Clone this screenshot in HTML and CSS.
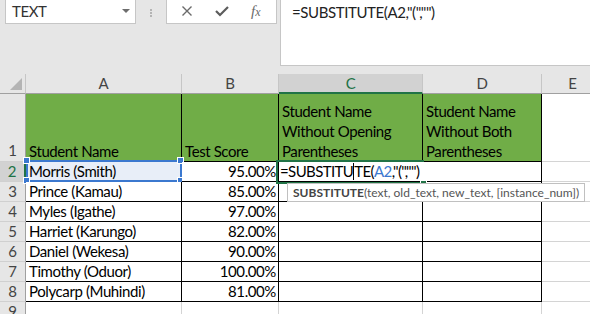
FILE: index.html
```html
<!DOCTYPE html>
<html>
<head>
    <meta charset="UTF-8">
    <title>SUBSTITUTE</title>
    <link rel="stylesheet" href="styles.css">
</head>
<body>
<div class="toolbar">
    <div class="name-box">
        <span>TEXT</span>
        <span class="drop-arrow"></span>
    </div>
    <div class="grip"><i></i><i></i><i></i></div>
    <div class="fx-box">
        <svg class="tool-icon" width="12" height="12" viewBox="0 0 12 12">
            <path d="M1.5 1.5 L10.5 10.5 M10.5 1.5 L1.5 10.5" stroke="#6a6a6a" stroke-width="1.4" fill="none"/>
        </svg>
        <svg class="tool-icon" width="14" height="12" viewBox="0 0 14 12">
            <path d="M1 6 L5 10 L13 2" stroke="#5c5c5c" stroke-width="2.2" fill="none"/>
        </svg>
        <span class="fx"><i>f</i><i class="fx-x">x</i></span>
    </div>
    <div class="formula-bar">=SUBSTITUTE(A2,"(","")</div>
</div>

<div class="sheet">
    <div class="hd corner"><span class="corner-tri"></span></div>
    <div class="hd">A</div>
    <div class="hd">B</div>
    <div class="hd hd-active">C</div>
    <div class="hd">D</div>
    <div class="hd">E</div>

    <div class="rh rh-tall">1</div>
    <div class="cell title">Student Name</div>
    <div class="cell title">Test Score</div>
    <div class="cell title">Student Name<br>Without Opening<br>Parentheses</div>
    <div class="cell title">Student Name<br>Without Both<br>Parentheses</div>
    <div class="cell blank"></div>

    <div class="rh rh-active">2</div>
    <div class="cell ref">Morris (Smith)<span class="ref-box"></span><span class="knob knob-tl"></span><span class="knob knob-tr"></span><span class="knob knob-bl"></span><span class="knob knob-br"></span></div>
    <div class="cell num">95.00%</div>
    <div class="cell editing">=SUBSTITU<span class="caret"></span>TE(<span class="ref-text">A2</span>,"(","")<span class="active-box"></span><span class="fill-handle"></span><div class="tip"><b>SUBSTITUTE</b>(text, old_text, new_text, [instance_num])</div></div>
    <div class="cell"></div>
    <div class="cell blank"></div>

    <div class="rh">3</div>
    <div class="cell">Prince (Kamau)</div>
    <div class="cell num">85.00%</div>
    <div class="cell"></div>
    <div class="cell"></div>
    <div class="cell blank"></div>

    <div class="rh">4</div>
    <div class="cell">Myles (Igathe)</div>
    <div class="cell num">97.00%</div>
    <div class="cell"></div>
    <div class="cell"></div>
    <div class="cell blank"></div>

    <div class="rh">5</div>
    <div class="cell">Harriet (Karungo)</div>
    <div class="cell num">82.00%</div>
    <div class="cell"></div>
    <div class="cell"></div>
    <div class="cell blank"></div>

    <div class="rh">6</div>
    <div class="cell">Daniel (Wekesa)</div>
    <div class="cell num">90.00%</div>
    <div class="cell"></div>
    <div class="cell"></div>
    <div class="cell blank"></div>

    <div class="rh">7</div>
    <div class="cell">Timothy (Oduor)</div>
    <div class="cell num">100.00%</div>
    <div class="cell"></div>
    <div class="cell"></div>
    <div class="cell blank"></div>

    <div class="rh">8</div>
    <div class="cell">Polycarp (Muhindi)</div>
    <div class="cell num">81.00%</div>
    <div class="cell"></div>
    <div class="cell"></div>
    <div class="cell blank"></div>

    <div class="rh">9</div>
    <div class="cell blank"></div>
    <div class="cell blank"></div>
    <div class="cell blank"></div>
    <div class="cell blank"></div>
    <div class="cell blank"></div>
</div>
</body>
</html>
```

FILE: styles.css
```css
body {
    margin: 0;
    width: 590px;
    height: 314px;
    overflow: hidden;
    background: #e6e6e6;
    font-family: Lato, "Liberation Sans", sans-serif;
    font-size: 15px;
    letter-spacing: -0.4px;
    color: #000;
}

/* formula bar strip */
.toolbar {
    height: 74px;
    display: flex;
    align-items: flex-start;
    padding-left: 5px;
}

.name-box {
    box-sizing: border-box;
    width: 131px;
    height: 24px;
    background: white;
    border: 1px solid #c6c6c6;
    border-top: none;
    display: flex;
    align-items: center;
    justify-content: space-between;
    padding: 0 5px 1px 6px;
    color: #333;
}

.drop-arrow {
    width: 0;
    height: 0;
    border-left: 4px solid transparent;
    border-right: 4px solid transparent;
    border-top: 4px solid #6d6d6d;
}

.grip {
    width: 30px;
    display: flex;
    flex-direction: column;
    align-items: center;
    gap: 1px;
    padding-top: 9px;
}

.grip i {
    width: 2px;
    height: 2px;
    background: #b4b4b4;
}

.fx-box {
    box-sizing: border-box;
    width: 111px;
    height: 24px;
    background: white;
    border: 1px solid #c6c6c6;
    border-top: none;
    display: flex;
    align-items: center;
    padding: 0 0 1px 14px;
    gap: 22px;
}

.fx {
    font-family: "Liberation Serif", serif;
    font-size: 15px;
    letter-spacing: 0;
    color: #6a6a6a;
    margin-left: 0;
}

.fx-x {
    font-size: 12px;
}

.formula-bar {
    flex: 1;
    height: 63px;
    margin-left: 3px;
    background: white;
    border-left: 1px solid #c6c6c6;
    border-bottom: 1px solid #c6c6c6;
    padding: 2px 0 0 11px;
    color: #222;
    line-height: 20px;
}

/* grid */
.sheet {
    display: grid;
    grid-template-columns: 26px 156px 97px 144px 119px 62px;
    grid-template-rows: 20px 68px repeat(8, 20px);
}

.hd, .rh, .cell {
    box-sizing: border-box;
    border-right: 1px solid #d4d4d4;
    border-bottom: 1px solid #d4d4d4;
    line-height: 19px;
}

.hd {
    background: #e6e6e6;
    border-right-color: #c6c6c6;
    border-bottom-color: #a0a0a0;
    text-align: center;
    color: #444;
}

.corner {
    position: relative;
    border-right-color: #c6c6c6;
}

.corner-tri {
    position: absolute;
    right: 3px;
    bottom: 3px;
    width: 0;
    height: 0;
    border-left: 12px solid transparent;
    border-bottom: 12px solid #b4b4b4;
}

.hd-active {
    background: #d2d2d2;
    color: #217346;
    border-bottom: 2px solid #217346;
}

.rh {
    background: #e6e6e6;
    border-right-color: #a0a0a0;
    border-bottom-color: #d0d0d0;
    text-align: center;
    color: #444;
}

.rh-tall {
    display: flex;
    align-items: flex-end;
    justify-content: center;
    padding-bottom: 1px;
}

.rh-active {
    background: #d2d2d2;
    color: #217346;
    border-right: 2px solid #217346;
}

.cell {
    background: white;
    border-right-color: #000;
    border-bottom-color: #000;
    padding: 0 3px;
    white-space: nowrap;
    position: relative;
}

.cell.blank {
    border-right-color: #d4d4d4;
    border-bottom-color: #d4d4d4;
}

.title {
    background: #70ad47;
    display: flex;
    align-items: flex-end;
    line-height: 20px;
    padding-bottom: 0;
}

.num {
    text-align: right;
    padding-right: 2px;
}

/* A2 referenced by the formula */
.ref {
    background: #e8eef8;
}

.ref-box {
    position: absolute;
    left: 0;
    top: -2px;
    width: 156px;
    height: 22px;
    box-sizing: border-box;
    border: 2px solid #3b78cf;
}

.knob {
    position: absolute;
    width: 5px;
    height: 5px;
    background: #3b78cf;
    border: 1px solid white;
    box-sizing: content-box;
}

.knob-tl { left: -3px; top: -5px; }
.knob-tr { left: 151px; top: -5px; }
.knob-bl { left: -3px; top: 15px; }
.knob-br { left: 151px; top: 15px; }

/* C2 being edited */
.editing {
    padding-left: 1px;
    border-right-color: transparent;
    letter-spacing: -0.6px;
    z-index: 2;
}

.caret {
    display: inline-block;
    width: 1px;
    height: 17px;
    background: #000;
    vertical-align: -3px;
}

.ref-text {
    color: #3b78cf;
}

.active-box {
    position: absolute;
    left: -3px;
    top: -2px;
    width: 148px;
    height: 24px;
    box-sizing: border-box;
    border: 2px solid #217346;
    border-right: none;
}

.fill-handle {
    position: absolute;
    left: 141px;
    top: 18px;
    width: 5px;
    height: 5px;
    background: #217346;
    border: 1px solid white;
}

.tip {
    position: absolute;
    left: 8px;
    top: 21px;
    width: 298px;
    height: 19px;
    box-sizing: border-box;
    background: white;
    border: 1px solid #c0c0c0;
    padding: 0 0 0 5px;
    font-size: 12px;
    letter-spacing: 0;
    line-height: 17px;
    color: #555;
}

.tip b {
    color: #444;
}
```
